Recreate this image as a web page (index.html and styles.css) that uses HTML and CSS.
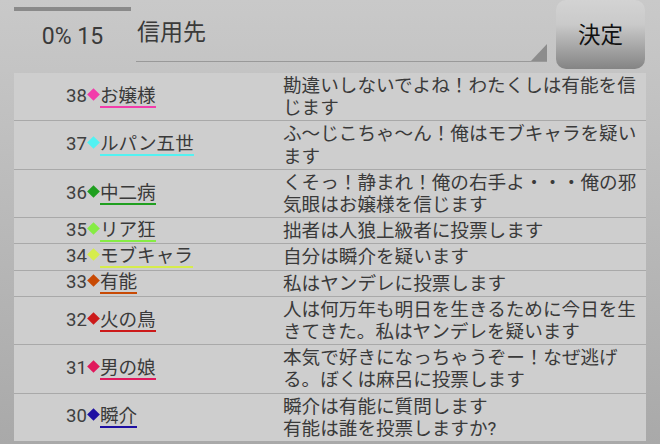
FILE: index.html
```html
<!DOCTYPE html>
<html>
<head>
    <title>投票ログ</title>
    <link rel="stylesheet" href="styles.css">
</head>
<body>
    <div class="topbar">
        <div class="status">
            <div class="progress"></div>
            <div class="count">0% 15</div>
        </div>
        <div class="target">
            <span class="target-label">信用先</span>
            <span class="arrow"></span>
        </div>
        <button class="decide">決定</button>
    </div>

    <div class="log">
        <div class="row">
            <div class="who"><span class="num">38</span><span class="mark pink"></span><span class="name pink">お嬢様</span></div>
            <div class="say">勘違いしないでよね！わたくしは有能を信じます</div>
        </div>
        <div class="row">
            <div class="who"><span class="num">37</span><span class="mark cyan"></span><span class="name cyan">ルパン五世</span></div>
            <div class="say">ふ〜じこちゃ〜ん！俺はモブキャラを疑います</div>
        </div>
        <div class="row">
            <div class="who"><span class="num">36</span><span class="mark green"></span><span class="name green">中二病</span></div>
            <div class="say">くそっ！静まれ！俺の右手よ・・・俺の邪気眼はお嬢様を信じます</div>
        </div>
        <div class="row">
            <div class="who"><span class="num">35</span><span class="mark lime"></span><span class="name lime">リア狂</span></div>
            <div class="say">拙者は人狼上級者に投票します</div>
        </div>
        <div class="row">
            <div class="who"><span class="num">34</span><span class="mark yellow"></span><span class="name yellow">モブキャラ</span></div>
            <div class="say">自分は瞬介を疑います</div>
        </div>
        <div class="row">
            <div class="who"><span class="num">33</span><span class="mark orange"></span><span class="name orange">有能</span></div>
            <div class="say">私はヤンデレに投票します</div>
        </div>
        <div class="row">
            <div class="who"><span class="num">32</span><span class="mark red"></span><span class="name red">火の鳥</span></div>
            <div class="say">人は何万年も明日を生きるために今日を生きてきた。私はヤンデレを疑います</div>
        </div>
        <div class="row">
            <div class="who"><span class="num">31</span><span class="mark crimson"></span><span class="name crimson">男の娘</span></div>
            <div class="say">本気で好きになっちゃうぞー！なぜ逃げる。ぼくは麻呂に投票します</div>
        </div>
        <div class="row">
            <div class="who"><span class="num">30</span><span class="mark blue"></span><span class="name blue">瞬介</span></div>
            <div class="say">瞬介は有能に質問します<br>有能は誰を投票しますか?</div>
        </div>
    </div>
</body>
</html>
```

FILE: styles.css
```css
html, body {
    margin: 0;
    height: 100%;
    overflow: hidden;
}

body {
    background: linear-gradient(#c9c9c9, #a9a9a9);
    font-family: Roboto, "Noto Sans CJK JP", sans-serif;
    color: #3a3a3a;
}

.topbar {
    display: flex;
    height: 73px;
}

.status {
    width: 117px;
    margin-left: 14px;
}
.progress {
    margin-top: 7px;
    height: 4px;
    background: #8a8a8a;
}
.count {
    margin-top: 12px;
    font-size: 23px;
    line-height: 27px;
    text-align: center;
}

.target {
    position: relative;
    width: 411px;
    height: 61px;
    margin-left: 5px;
    border-bottom: 1.5px solid #999;
}
.target-label {
    display: block;
    padding-top: 18px;
    padding-left: 1px;
    font-size: 23px;
    line-height: 30px;
}
.arrow {
    position: absolute;
    right: 0;
    bottom: 0;
    width: 0;
    height: 0;
    border-left: 16px solid transparent;
    border-bottom: 17px solid #8c8c8c;
}

.decide {
    width: 89px;
    height: 69px;
    margin-left: 9px;
    border: none;
    border-radius: 10px;
    background: linear-gradient(#d3d3d3 0%, #cacaca 35%, #848484 100%);
    color: #111;
    font-family: "Noto Sans CJK JP", sans-serif;
    font-size: 22.5px;
    padding: 0 0 4px;
}

.log {
    margin-left: 14px;
    width: 632px;
    background: #cecece;
}

.row {
    display: flex;
    align-items: center;
    padding: 2px 0 1px;
    border-bottom: 1px solid #a9a9a9;
}

.who {
    width: 217px;
    padding-left: 52px;
    font-size: 18.6px;
    line-height: 19px;
    white-space: nowrap;
}
.num { color: #404040; }
.mark {
    display: inline-block;
    width: 9px;
    height: 9px;
    margin: 0 2px;
    vertical-align: 3px;
    transform: rotate(45deg);
    background: currentColor;
}
.name {
    display: inline-block;
    border-bottom: 2px solid currentColor;
}
.name::first-line { color: #3a3a3a; }

.say {
    flex: 1;
    font-size: 18.6px;
    line-height: 22.2px;
}

.pink { color: #f23cab; }
.cyan { color: #52f2f2; }
.green { color: #1f9f1f; }
.lime { color: #86ec44; }
.yellow { color: #d6ec4c; }
.orange { color: #c84a04; }
.red { color: #cc1a1a; }
.crimson { color: #e0185c; }
.blue { color: #1e10a2; }
```
